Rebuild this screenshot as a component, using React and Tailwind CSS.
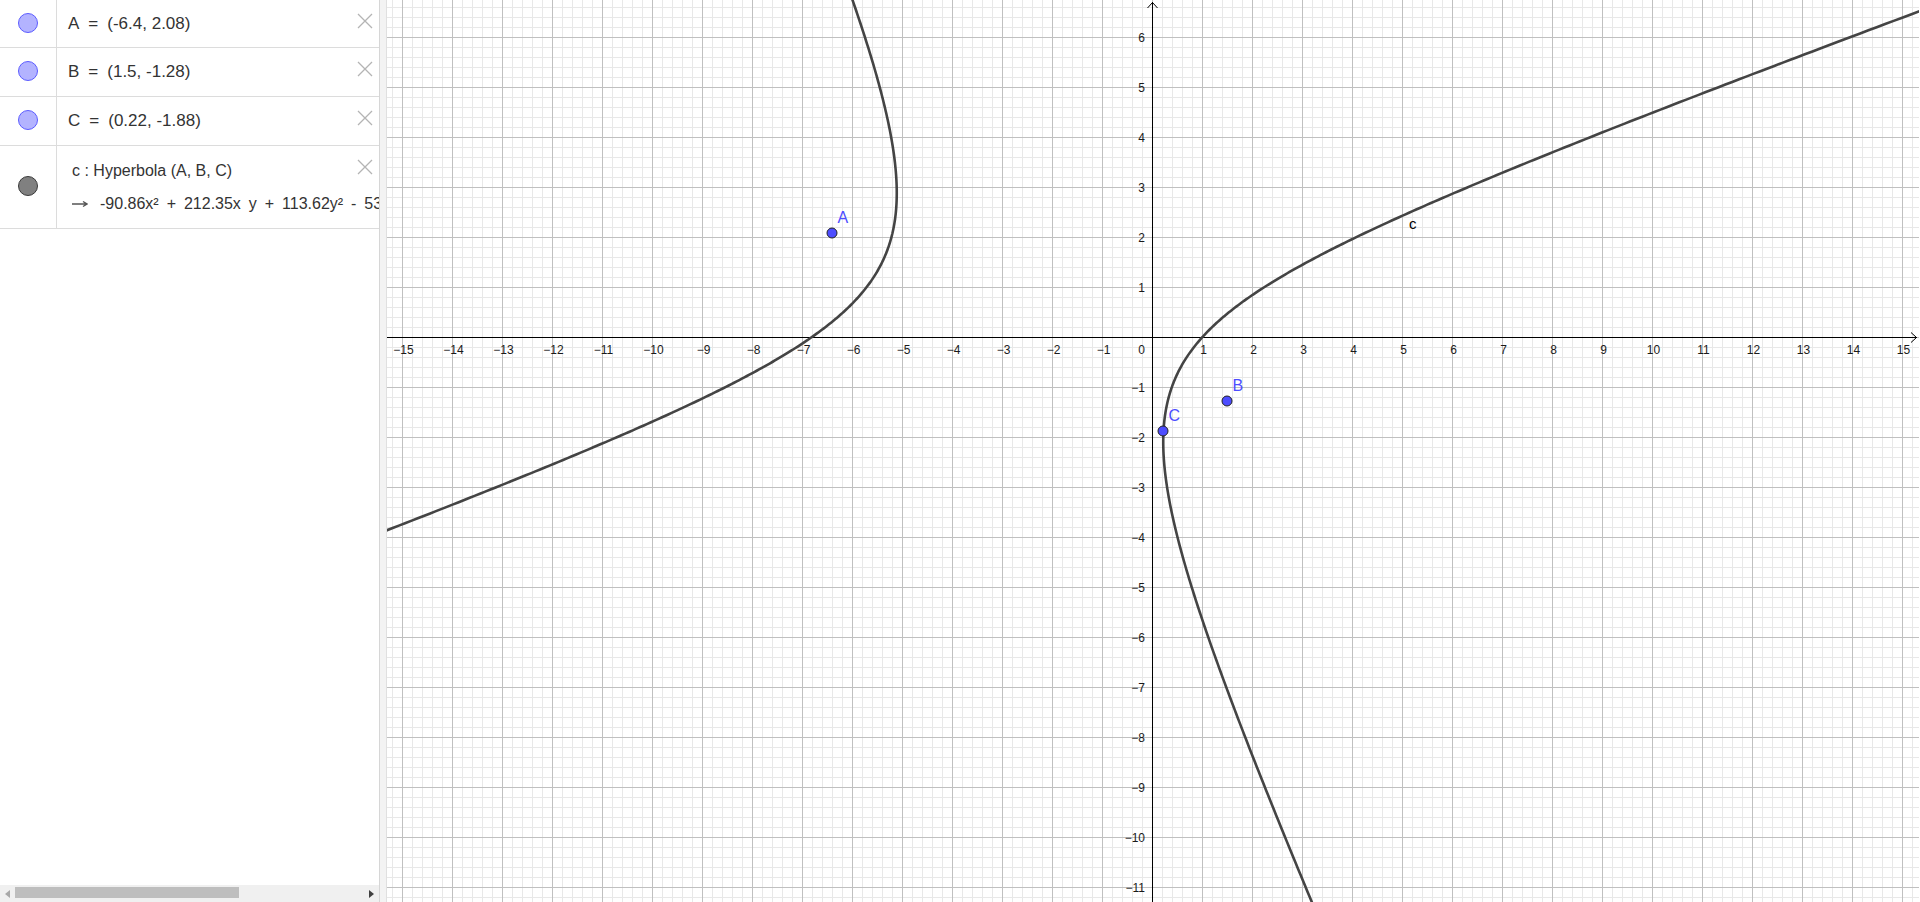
import React from 'react';

const W = 1532;
const H = 902;
const OX = 765; // origin in canvas px
const OY = 337;
const S = 50; // px per unit

const pts = {
  A: [-6.4, 2.08],
  B: [1.5, -1.28],
  C: [0.22, -1.88],
};

const px = (x) => OX + 0.5 + x * S;
const py = (y) => OY + 0.5 - y * S;

function hyperbolaPaths() {
  const [ax, ay] = pts.A;
  const [bx, by] = pts.B;
  const [qx, qy] = pts.C;
  const dA = Math.hypot(qx - ax, qy - ay);
  const dB = Math.hypot(qx - bx, qy - by);
  const a = Math.abs(dA - dB) / 2;
  const c = Math.hypot(bx - ax, by - ay) / 2;
  const b = Math.sqrt(c * c - a * a);
  const mx = (ax + bx) / 2;
  const my = (ay + by) / 2;
  const ux = (bx - ax) / (2 * c);
  const uy = (by - ay) / (2 * c);
  const vx = -uy;
  const vy = ux;
  return [1, -1].map((s) => {
    let d = '';
    for (let t = -3.2; t <= 3.2; t += 0.01) {
      const ch = Math.cosh(t);
      const sh = Math.sinh(t);
      const x = mx + s * a * ch * ux + b * sh * vx;
      const y = my + s * a * ch * uy + b * sh * vy;
      d += `${d ? 'L' : 'M'}${px(x).toFixed(2)} ${py(y).toFixed(2)} `;
    }
    return d;
  });
}

function Grid() {
  const minorV = [];
  const majorV = [];
  for (let k = -80; k <= 80; k++) {
    const x = OX + 0.5 + k * 10;
    if (x < 0 || x > W) continue;
    (k % 5 === 0 ? majorV : minorV).push(x);
  }
  const minorH = [];
  const majorH = [];
  for (let k = -40; k <= 60; k++) {
    const y = OY + 0.5 + k * 10;
    if (y < 0 || y > H) continue;
    (k % 5 === 0 ? majorH : minorH).push(y);
  }
  return (
    <g>
      {minorV.map((x) => <line key={'mv' + x} x1={x} y1={0} x2={x} y2={H} stroke="#e8e8e8" strokeWidth="1" />)}
      {minorH.map((y) => <line key={'mh' + y} x1={0} y1={y} x2={W} y2={y} stroke="#e8e8e8" strokeWidth="1" />)}
      {majorV.map((x) => <line key={'Mv' + x} x1={x} y1={0} x2={x} y2={H} stroke="#c0c0c0" strokeWidth="1" />)}
      {majorH.map((y) => <line key={'Mh' + y} x1={0} y1={y} x2={W} y2={y} stroke="#c0c0c0" strokeWidth="1" />)}
    </g>
  );
}

function Axes() {
  const xs = [];
  for (let i = -15; i <= 15; i++) if (i !== 0) xs.push(i);
  const ys = [];
  for (let i = -11; i <= 6; i++) if (i !== 0) ys.push(i);
  const fmt = (n) => (n < 0 ? '\u2212' + Math.abs(n) : String(n));
  return (
    <g>
      <line x1={0} y1={OY + 0.5} x2={W - 2} y2={OY + 0.5} stroke="#000" strokeWidth="1" />
      <polyline points={`${W - 8},${OY - 4.5} ${W - 2.5},${OY + 0.5} ${W - 8},${OY + 5.5}`} fill="none" stroke="#000" strokeWidth="1" />
      <line x1={OX + 0.5} y1={2} x2={OX + 0.5} y2={H} stroke="#000" strokeWidth="1" />
      <polyline points={`${OX - 4.5},${8} ${OX + 0.5},${2.5} ${OX + 5.5},${8}`} fill="none" stroke="#000" strokeWidth="1" />
      <g fontFamily="'Liberation Sans', Arial, sans-serif" fontSize="12" fill="#1a1a1a">
        {xs.map((i) => (
          <text key={'x' + i} x={px(i) + 1} y={OY + 17} textAnchor="middle">{fmt(i)}</text>
        ))}
        {ys.map((i) => (
          <text key={'y' + i} x={OX - 7} y={py(i) + 4} textAnchor="end">{fmt(i)}</text>
        ))}
        <text x={OX - 7} y={OY + 17} textAnchor="end">0</text>
      </g>
    </g>
  );
}

function Canvas() {
  const [p1, p2] = hyperbolaPaths();
  return (
    <svg width={W} height={H} viewBox={`0 0 ${W} ${H}`} className="block">
      <rect width={W} height={H} fill="#fff" />
      <Grid />
      <Axes />
      <path d={p1} fill="none" stroke="#444" strokeWidth="2.6" strokeLinejoin="round" />
      <path d={p2} fill="none" stroke="#444" strokeWidth="2.6" strokeLinejoin="round" />
      <text x={1022} y={229} fontFamily="'Liberation Sans', Arial, sans-serif" fontSize="15" fill="#000">c</text>
      {Object.entries(pts).map(([name, [x, y]]) => (
        <g key={name}>
          <circle cx={px(x) - 0.5} cy={py(y) - 0.5} r="5" fill="#4d4dff" stroke="#222" strokeWidth="1" />
          <text x={px(x) + 5} y={py(y) - 11} fontFamily="'Liberation Sans', Arial, sans-serif" fontSize="16" fill="#4d4dff">{name}</text>
        </g>
      ))}
    </svg>
  );
}

function CloseIcon() {
  return (
    <svg width="16" height="16" viewBox="0 0 16 16" className="absolute right-[6px] top-[13px]">
      <path d="M1 1 L15 15 M15 1 L1 15" stroke="#b4b4b4" strokeWidth="1.3" fill="none" />
    </svg>
  );
}

function Row({ children, height, dot, dotTop }) {
  return (
    <div className="relative flex border-b border-[#dcdcdc]" style={{ height }}>
      <div className="w-[57px] shrink-0 border-r border-[#dcdcdc] relative">
        <div
          className={`absolute left-[18px] w-[20px] h-[20px] rounded-full border ${
            dot === 'gray' ? 'bg-[#808080] border-[#3a3a3a]' : 'bg-[#b3b3ff] border-[#5c5cff]'
          }`}
          style={{ top: dotTop }}
        />
      </div>
      <div className="flex-1 min-w-0 overflow-hidden">{children}</div>
      <CloseIcon />
    </div>
  );
}

// "X = (…)" with the wider spacing round the equals sign
function Def({ name, value }) {
  return (
    <div className="pl-[11px] pt-[12px] text-[17px] leading-[24px] text-[#333] whitespace-nowrap">
      {name}
      <span className="mx-[9px]">=</span>
      {value}
    </div>
  );
}

export default function App() {
  return (
    <div className="flex w-[1920px] h-[902px] overflow-hidden bg-white text-[#333] font-['Liberation_Sans',Arial,sans-serif]">
      <aside className="w-[380px] shrink-0 flex flex-col bg-white border-r border-[#d6d6d6]">
        <Row height={48} dotTop={13}>
          <Def name="A" value="(-6.4, 2.08)" />
        </Row>
        <Row height={49} dotTop={13}>
          <Def name="B" value="(1.5, -1.28)" />
        </Row>
        <Row height={49} dotTop={13}>
          <Def name="C" value="(0.22, -1.88)" />
        </Row>
        <Row height={83} dot="gray" dotTop={30}>
          <div className="pl-[15px] pt-[15px] text-[16px] leading-[20px] text-[#333] whitespace-nowrap">c : Hyperbola (A, B, C)</div>
          <div className="pl-[15px] pt-[13px] flex items-center gap-[12px] whitespace-nowrap">
            <svg width="16" height="8" viewBox="0 0 16 8" className="shrink-0">
              <path d="M0 4 H14 M11 1.5 L15 4 L11 6.5" stroke="#555" strokeWidth="1.4" fill="none" />
            </svg>
            <span className="text-[16px] leading-[20px] text-[#333] [word-spacing:3.5px]">
              -90.86x² + 212.35x y + 113.62y² - 53.48x - 15.77y = 126.73
            </span>
          </div>
        </Row>
        <div className="flex-1" />
        <div className="h-[17px] bg-[#f0f0f0] flex items-center relative">
          <span className="absolute left-[5px] top-[5px] w-0 h-0 border-y-[4px] border-y-transparent border-r-[5px] border-r-[#a8a8a8]" />
          <div className="absolute left-[15px] top-[2px] w-[224px] h-[11px] bg-[#bebebe]" />
          <span className="absolute right-[5px] top-[5px] w-0 h-0 border-y-[4px] border-y-transparent border-l-[5px] border-l-[#404040]" />
        </div>
      </aside>
      <div className="w-[7px] shrink-0 bg-[#f3f3f3] border-r border-[#e0e0e0]" />
      <main className="flex-1 relative overflow-hidden">
        <Canvas />
      </main>
    </div>
  );
}
